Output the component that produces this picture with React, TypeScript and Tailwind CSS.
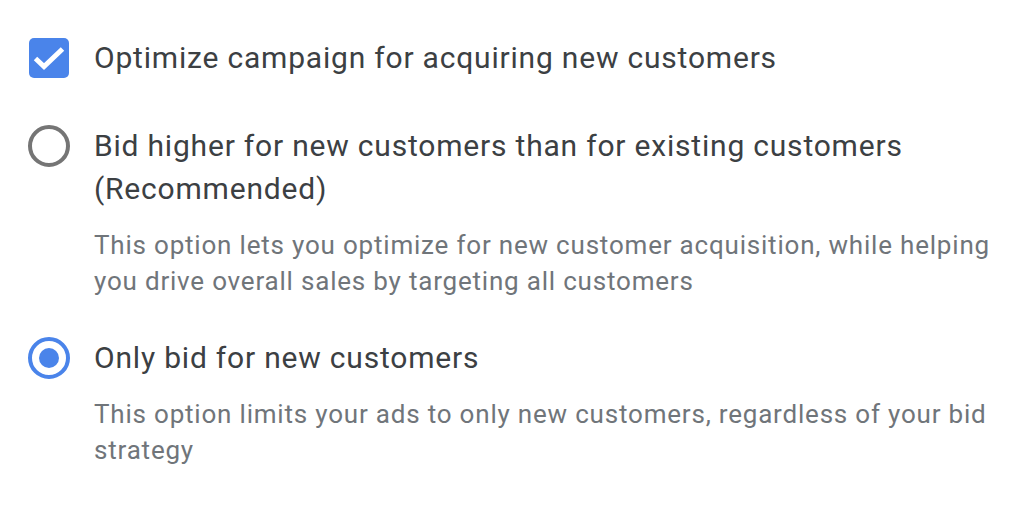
import React, { useState } from 'react';

type Mode = 'higher' | 'only';

const Radio = ({ checked }: { checked: boolean }) => (
  <span className="flex h-[43px] w-[42px] shrink-0 items-center justify-center">
    <span
      className={`flex h-[42px] w-[42px] items-center justify-center rounded-full border-[4px] ${
        checked ? 'border-[#4a84ea]' : 'border-[#757575]'
      }`}
    >
      {checked && <span className="h-[20px] w-[20px] rounded-full bg-[#4a84ea]" />}
    </span>
  </span>
);

export default function App() {
  const [optimize, setOptimize] = useState(true);
  const [mode, setMode] = useState<Mode>('only');

  return (
    <div className="h-[508px] w-[1010px] bg-white pl-[28px] pt-[36px] font-['Roboto',sans-serif] antialiased">
      <label className="flex cursor-pointer items-center">
        <span className="flex w-[42px] shrink-0 justify-center">
          <span
            onClick={() => setOptimize(!optimize)}
            className={`flex h-[40px] w-[40px] items-center justify-center rounded-[5px] ${
              optimize ? 'bg-[#4a84ea]' : 'border-[4px] border-[#757575]'
            }`}
          >
            {optimize && (
              <svg width="40" height="40" viewBox="0 0 40 40">
                <path d="M6.5 20.5L15 28.5L33.5 11" fill="none" stroke="white" strokeWidth="5" />
              </svg>
            )}
          </span>
        </span>
        <span className="ml-[24px] text-[30px] leading-[43px] tracking-[0.8px] text-[#3c4043]">
          Optimize campaign for acquiring new customers
        </span>
      </label>

      <div className="mt-[45px] flex" onClick={() => setMode('higher')}>
        <Radio checked={mode === 'higher'} />
        <div className="ml-[24px]">
          <div className="text-[30px] leading-[43px] tracking-[0.8px] text-[#3c4043]">
            Bid higher for new customers than for existing customers
            <br />
            (Recommended)
          </div>
          <p className="mt-[18px] text-[26px] leading-[35.5px] tracking-[0.8px] text-[#70757a]">
            This option lets you optimize for new customer acquisition, while helping
            <br />
            you drive overall sales by targeting all customers
          </p>
        </div>
      </div>

      <div className="mt-[37px] flex" onClick={() => setMode('only')}>
        <Radio checked={mode === 'only'} />
        <div className="ml-[24px]">
          <div className="text-[30px] leading-[43px] tracking-[0.8px] text-[#3c4043]">
            Only bid for new customers
          </div>
          <p className="mt-[18px] text-[26px] leading-[35.5px] tracking-[0.8px] text-[#70757a]">
            This option limits your ads to only new customers, regardless of your bid
            <br />
            strategy
          </p>
        </div>
      </div>
    </div>
  );
}
